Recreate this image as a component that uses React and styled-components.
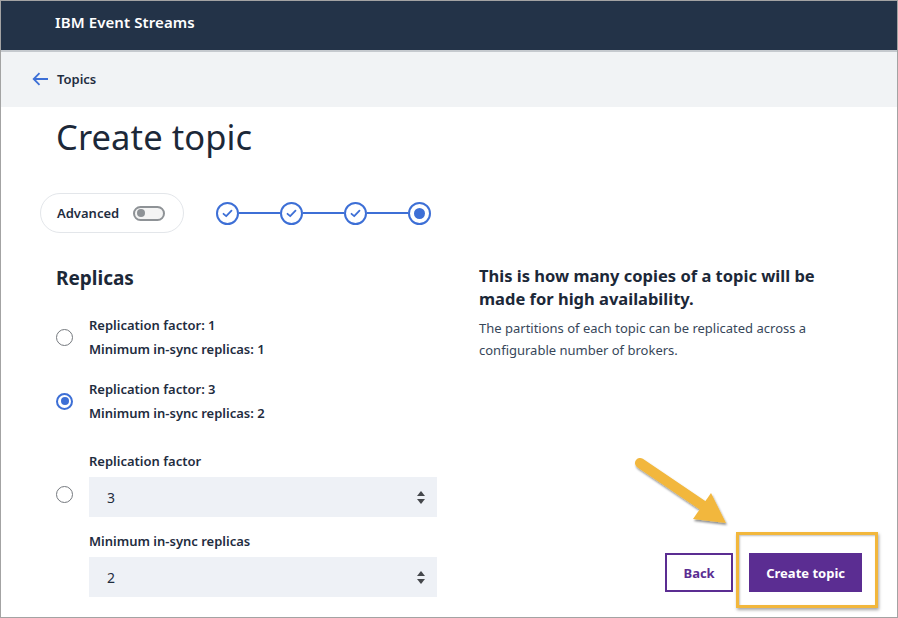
import React from "react";
import styled, { createGlobalStyle } from "styled-components";

const Global = createGlobalStyle`
  html, body { margin: 0; padding: 0; background: #fff; }
  body { font-family: "Noto Sans", "Open Sans", sans-serif; color: #1c2b3c; }
  * { box-sizing: border-box; }
`;

const Frame = styled.div`
  position: relative;
  width: 898px;
  height: 618px;
  border: 1px solid #a3a3a3;
  overflow: hidden;
  background: #fff;
  display: flex;
  flex-direction: column;
`;

const Header = styled.header`
  height: 51px;
  flex: none;
  background: #233348;
  border-bottom: 2px solid #c5c9ce;
  display: flex;
  align-items: center;
  padding-left: 54px;
  padding-bottom: 8px;
  color: #fff;
  font-size: 15px;
  font-weight: 600;
  letter-spacing: 0.1px;
`;

const Crumbs = styled.nav`
  height: 55px;
  flex: none;
  background: #f1f3f5;
  display: flex;
  align-items: center;
  gap: 8px;
  padding-left: 31px;
  padding-bottom: 1px;
  font-size: 13px;
  font-weight: 600;
  color: #1f2d3f;
`;

const Main = styled.main`
  flex: 1;
  padding: 0 0 0 55px;
  display: flex;
  flex-direction: column;
`;

const Title = styled.h1`
  margin: 8px 0 0;
  font-size: 34.5px;
  font-weight: 400;
  line-height: 44px;
  color: #1c2838;
  letter-spacing: 0.1px;
`;

const StepRow = styled.div`
  display: flex;
  align-items: center;
  gap: 32px;
  margin: 34px 0 0 -16px;
`;

const AdvancedPill = styled.div`
  width: 144px;
  height: 40px;
  border: 1px solid #e3e6ea;
  border-radius: 20px;
  display: flex;
  align-items: center;
  padding-left: 16px;
  gap: 14px;
  font-size: 13px;
  font-weight: 600;
  color: #1f2d3f;
`;

const Toggle = styled.span`
  position: relative;
  width: 32px;
  height: 15px;
  border: 2px solid #8e9296;
  border-radius: 8px;
  background: #f4f4f4;
  &::after {
    content: "";
    position: absolute;
    left: 2px;
    top: 1.5px;
    width: 8px;
    height: 8px;
    border-radius: 50%;
    background: #8e9296;
  }
`;

const Stepper = styled.div`
  display: flex;
  align-items: center;
`;

const StepDot = styled.span`
  width: 23px;
  height: 23px;
  border: 2px solid #3d6fd6;
  border-radius: 50%;
  display: flex;
  align-items: center;
  justify-content: center;
  flex: none;
`;

const Inner = styled.span`
  width: 11px;
  height: 11px;
  border-radius: 50%;
  background: #3d6fd6;
`;

const StepLine = styled.span`
  width: 41px;
  height: 2px;
  background: #3d6fd6;
`;

const Columns = styled.div`
  display: flex;
  margin-top: 32px;
`;

const Left = styled.section`
  width: 382px;
  display: flex;
  flex-direction: column;
`;

const Right = styled.section`
  width: 355px;
  margin-left: 42px;
  display: flex;
  flex-direction: column;
`;

const SectionTitle = styled.h2`
  margin: 0;
  font-size: 19px;
  font-weight: 700;
  line-height: 26px;
  color: #1c2838;
`;

const Option = styled.div`
  display: flex;
  align-items: ${(p) => (p.$top ? "flex-start" : "center")};
  gap: 16px;
  margin-top: ${(p) => p.$mt}px;
`;

const Radio = styled.span`
  flex: none;
  width: 17px;
  height: 17px;
  border-radius: 50%;
  border: ${(p) => (p.$on ? "2px" : "1.5px")} solid ${(p) => (p.$on ? "#3d6fd6" : "#75797e")};
  display: flex;
  align-items: center;
  justify-content: center;
  margin-top: ${(p) => p.$mt || 0}px;
  &::after {
    content: "";
    display: ${(p) => (p.$on ? "block" : "none")};
    width: 8px;
    height: 8px;
    border-radius: 50%;
    background: #3d6fd6;
  }
`;

const OptText = styled.div`
  display: flex;
  flex-direction: column;
  gap: 6px;
  font-size: 13px;
  font-weight: 600;
  line-height: 18px;
  color: #1f2d3f;
`;

const FieldGroup = styled.div`
  display: flex;
  flex-direction: column;
  width: 348px;
`;

const Label = styled.label`
  font-size: 13px;
  font-weight: 600;
  line-height: 18px;
  color: #1f2d3f;
  margin-top: ${(p) => p.$mt || 0}px;
`;

const NumberBox = styled.div`
  margin-top: 7px;
  height: 40px;
  background: #eef1f6;
  display: flex;
  align-items: center;
  justify-content: space-between;
  padding: 0 12px 0 18px;
  font-size: 14px;
  color: #1f2d3f;
`;

const Spin = styled.span`
  display: flex;
  flex-direction: column;
  gap: 3px;
  &::before, &::after {
    content: "";
    width: 0;
    height: 0;
    border-left: 4px solid transparent;
    border-right: 4px solid transparent;
  }
  &::before { border-bottom: 5px solid #45484c; }
  &::after { border-top: 5px solid #45484c; }
`;

const InfoTitle = styled.h3`
  margin: 0;
  font-size: 16.5px;
  font-weight: 700;
  line-height: 23px;
  color: #1c2838;
  margin-top: -1px;
  margin-left: -1px;
`;

const InfoText = styled.p`
  margin: 7px 0 0 -1px;
  font-size: 13px;
  line-height: 22px;
  color: #37475a;
`;

const Actions = styled.div`
  display: flex;
  justify-content: flex-end;
  gap: 16px;
  margin-top: 192px;
  margin-right: -27px;
`;

const Button = styled.button`
  height: 39px;
  padding: 0 ${(p) => (p.$primary ? 15 : 16.5)}px;
  font-family: inherit;
  font-size: 13px;
  font-weight: 700;
  border: 2px solid #5b2d92;
  background: ${(p) => (p.$primary ? "#5b2d92" : "#fff")};
  color: ${(p) => (p.$primary ? "#fff" : "#5b2d92")};
`;

const Highlight = styled.div`
  position: absolute;
  left: 735px;
  top: 531px;
  width: 142px;
  height: 76px;
  border: 3px solid #f2b73c;
  box-shadow: 1px 2px 3px rgba(0,0,0,0.35), inset 1px 1px 2px rgba(0,0,0,0.25);
  pointer-events: none;
`;

const ArrowSvg = styled.svg`
  position: absolute;
  left: 620px;
  top: 440px;
  overflow: visible;
  pointer-events: none;
`;

const Check = () => (
  <svg width="11" height="9" viewBox="0 0 11 9">
    <path d="M1.5 4.8 L4.2 7.2 L9.5 1.6" fill="none" stroke="#3d6fd6" strokeWidth="1.8" strokeLinecap="round" strokeLinejoin="round" />
  </svg>
);

export default function App() {
  return (
    <>
      <Global />
      <Frame>
        <Header>IBM Event Streams</Header>
        <Crumbs>
          <svg width="17" height="14" viewBox="0 0 17 14">
            <path d="M16 7H2 M7.5 1.2 L1.7 7 L7.5 12.8" fill="none" stroke="#3d6fd6" strokeWidth="1.8" />
          </svg>
          Topics
        </Crumbs>
        <Main>
          <Title>Create topic</Title>
          <StepRow>
            <AdvancedPill>
              Advanced
              <Toggle />
            </AdvancedPill>
            <Stepper>
              <StepDot><Check /></StepDot>
              <StepLine />
              <StepDot><Check /></StepDot>
              <StepLine />
              <StepDot><Check /></StepDot>
              <StepLine />
              <StepDot><Inner /></StepDot>
            </Stepper>
          </StepRow>
          <Columns>
            <Left>
              <SectionTitle>Replicas</SectionTitle>
              <Option $mt={25}>
                <Radio />
                <OptText>
                  <span>Replication factor: 1</span>
                  <span>Minimum in-sync replicas: 1</span>
                </OptText>
              </Option>
              <Option $mt={22}>
                <Radio $on />
                <OptText>
                  <span>Replication factor: 3</span>
                  <span>Minimum in-sync replicas: 2</span>
                </OptText>
              </Option>
              <Option $mt={30} $top>
                <Radio $mt={34} />
                <FieldGroup>
                  <Label>Replication factor</Label>
                  <NumberBox>3<Spin /></NumberBox>
                  <Label $mt={15}>Minimum in-sync replicas</Label>
                  <NumberBox>2<Spin /></NumberBox>
                </FieldGroup>
              </Option>
            </Left>
            <Right>
              <InfoTitle>This is how many copies of a topic will be made for high availability.</InfoTitle>
              <InfoText>The partitions of each topic can be replicated across a configurable number of brokers.</InfoText>
              <Actions>
                <Button>Back</Button>
                <Button $primary>Create topic</Button>
              </Actions>
            </Right>
          </Columns>
        </Main>
        <Highlight />
        <ArrowSvg width="120" height="100" viewBox="0 0 120 100">
          <defs>
            <filter id="sh" x="-20%" y="-20%" width="140%" height="140%">
              <feDropShadow dx="1" dy="2" stdDeviation="1.2" floodColor="#000" floodOpacity="0.45" />
            </filter>
          </defs>
          <g filter="url(#sh)">
            <path d="M19 22 L84 66" stroke="#f2b73c" strokeWidth="10" strokeLinecap="round" />
            <path d="M90 52 L105 82 L72 78 Z" fill="#f2b73c" />
          </g>
        </ArrowSvg>
      </Frame>
    </>
  );
}
